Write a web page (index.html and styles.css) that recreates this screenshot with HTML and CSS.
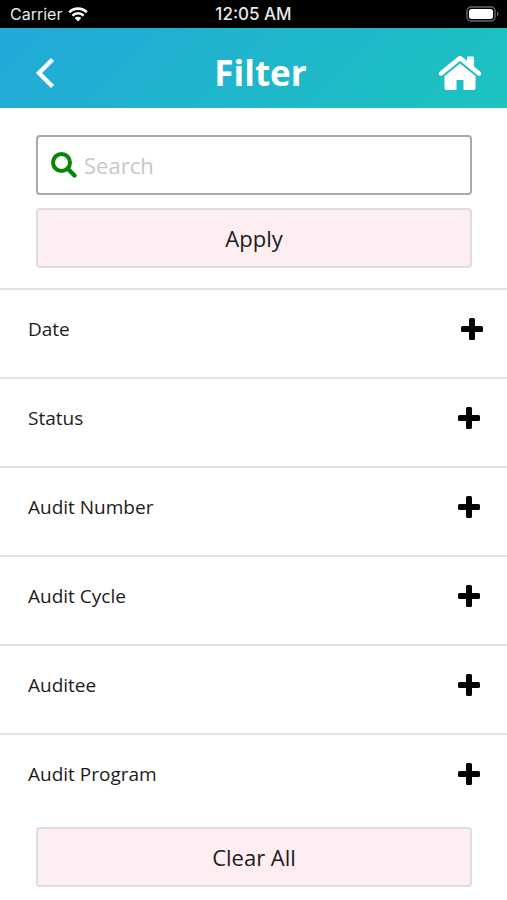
FILE: index.html
```html
<!DOCTYPE html>
<html lang="en">
<head>
<meta charset="utf-8">
<meta name="viewport" content="width=device-width, initial-scale=1">
<title>Filter</title>
<link rel="stylesheet" href="styles.css">
</head>
<body>
<svg class="sprite" aria-hidden="true">
  <symbol id="plus" viewBox="0 0 22 22"><path d="M9.500 0h3A1.500 1.500 0 0 1 14 1.500V8h6.500A1.500 1.500 0 0 1 22 9.500v3A1.500 1.500 0 0 1 20.500 14H14v6.500a1.500 1.500 0 0 1-1.500 1.500h-3A1.500 1.500 0 0 1 8 20.500V14H1.500A1.500 1.500 0 0 1 0 12.500v-3A1.500 1.500 0 0 1 1.500 8H8V1.500A1.500 1.500 0 0 1 9.500 0z"/></symbol>
</svg>
<div class="status-bar">
  <div class="carrier">
    <span>Carrier</span>
    <svg class="wifi" viewBox="0 0 20 15" aria-hidden="true">
      <path d="M1.200 5.200a12.600 12.600 0 0 1 17.600 0M4.400 8.600a8 8 0 0 1 11.200 0" fill="none" stroke="#fff" stroke-width="2.600"/>
      <path d="M10 14.500l-3.300-3.400a4.700 4.700 0 0 1 6.600 0z" fill="#fff"/>
    </svg>
  </div>
  <span class="clock">12:05 AM</span>
  <svg class="battery" viewBox="0 0 33 16" aria-hidden="true">
    <rect x="1" y="1" width="28" height="14" rx="4" fill="none" stroke="#69696b" stroke-width="1.400"/>
    <rect x="3" y="3" width="24" height="10" rx="2.500" fill="#fff"/>
    <path d="M31 5.800v4.400q1.500-.6 1.500-2.200T31 5.800z" fill="#69696b"/>
  </svg>
</div>
<header class="header">
  <button class="nav-button" type="button" aria-label="Back">
    <svg class="back" viewBox="0 0 20 32" aria-hidden="true"><path d="M17.500 2.500L4 16l13.500 13.500" fill="none" stroke="#fff" stroke-width="4.400"/></svg>
  </button>
  <h1 class="title">Filter</h1>
  <a class="nav-button home-link" href="#" aria-label="Home">
    <svg class="home" viewBox="0 0 44 36" aria-hidden="true">
      <path d="M3 18.500L22 3l19 15.500" fill="none" stroke="#fff" stroke-width="4.400" stroke-linejoin="round" stroke-linecap="round"/>
      <path d="M30 1.500h5a1 1 0 0 1 1 1V15l-7-5.600V2.500a1 1 0 0 1 1-1zM22 8.500l15.500 12.500V33a2 2 0 0 1-2 2h-10V25h-7v10h-10a2 2 0 0 1-2-2V21z" fill="#fff"/>
    </svg>
  </a>
</header>
<main>
  <form class="search-form">
    <label class="search">
      <svg class="search-icon" viewBox="0 0 26 26" aria-hidden="true"><circle cx="10.500" cy="10.500" r="8.500" fill="none" stroke="#078507" stroke-width="4"/><path d="M17 17l6.500 6.500" stroke="#078507" stroke-width="4.400" stroke-linecap="round"/></svg>
      <input class="search-input" type="text" placeholder="Search" aria-label="Search">
    </label>
    <button class="action" type="submit">Apply</button>
  </form>
  <div class="filters">
    <button class="filter filter-first" type="button"><span>Date</span><svg class="plus"><use href="#plus"/></svg></button>
    <button class="filter" type="button"><span>Status</span><svg class="plus"><use href="#plus"/></svg></button>
    <button class="filter" type="button"><span>Audit Number</span><svg class="plus"><use href="#plus"/></svg></button>
    <button class="filter" type="button"><span>Audit Cycle</span><svg class="plus"><use href="#plus"/></svg></button>
    <button class="filter" type="button"><span>Auditee</span><svg class="plus"><use href="#plus"/></svg></button>
    <button class="filter" type="button"><span>Audit Program</span><svg class="plus"><use href="#plus"/></svg></button>
  </div>
</main>
<footer class="footer">
  <button class="action" type="button">Clear All</button>
</footer>
</body>
</html>
```

FILE: styles.css
```css
* {
  box-sizing: border-box;
}

body {
  margin: 0;
  background: #fff;
  color: #1c1c1c;
  font-family: "Open Sans", "Noto Sans", sans-serif;
}

button,
input {
  font-family: inherit;
  color: inherit;
}

svg {
  display: block;
}

.sprite {
  display: none;
}

.status-bar {
  display: grid;
  grid-template-columns: 1fr auto 1fr;
  align-items: center;
  height: 28px;
  padding: 0 8px;
  background: #000;
  color: #e8e8e8;
  font-family: Inter, "Liberation Sans", sans-serif;
  font-size: 16px;
  line-height: 28px;
}

.carrier {
  display: flex;
  align-items: center;
  gap: 6px;
  padding-left: 2px;
}

.wifi {
  width: 20px;
  height: 15px;
}

.clock {
  font-size: 17px;
  font-weight: 500;
}

.battery {
  justify-self: end;
  width: 33px;
  height: 16px;
}

.header {
  display: grid;
  grid-template-columns: 1fr auto 1fr;
  align-items: center;
  height: 80px;
  padding: 9px 25px 0 35px;
  background: linear-gradient(135deg, #22a9d9, #1cc3bf);
}

.nav-button {
  padding: 0;
  border: 0;
  background: none;
  cursor: pointer;
}

.home-link {
  justify-self: end;
}

.back {
  width: 20px;
  height: 32px;
}

.title {
  margin: 0;
  padding-left: 4px;
  color: #fff;
  font-size: 35px;
  font-weight: 700;
  line-height: 48px;
}

.home {
  width: 44px;
  height: 36px;
}

.search-form {
  display: grid;
  gap: 13px;
  padding: 27px 35px 20px 36px;
}

.search {
  display: flex;
  align-items: center;
  gap: 7px;
  height: 60px;
  padding: 0 13px;
  border: 2px solid #a8a8a8;
  border-radius: 4px;
}

.search-icon {
  flex: none;
  width: 26px;
  height: 26px;
}

.search-input {
  flex: 1;
  min-width: 0;
  padding: 0;
  border: 0;
  outline: 0;
  background: none;
  font-size: 22px;
  line-height: 30px;
}

.search-input::placeholder {
  color: #c7c7c7;
}

.action {
  width: 100%;
  height: 60px;
  padding: 0;
  border: 2px solid #dfdcdd;
  border-radius: 4px;
  background: #feeef1;
  font-size: 22px;
  line-height: 30px;
  cursor: pointer;
}

.filter {
  display: flex;
  align-items: center;
  justify-content: space-between;
  width: 100%;
  padding: 27px 27px 36px 28px;
  border: 0;
  border-top: 2px solid #e2e2e2;
  background: none;
  font-size: 19px;
  line-height: 24px;
  text-align: left;
  cursor: pointer;
}

.filter-first {
  padding-right: 24px;
}

.plus {
  width: 22px;
  height: 22px;
  fill: #000;
}

.footer {
  padding: 5px 35px 13px 36px;
}
```
